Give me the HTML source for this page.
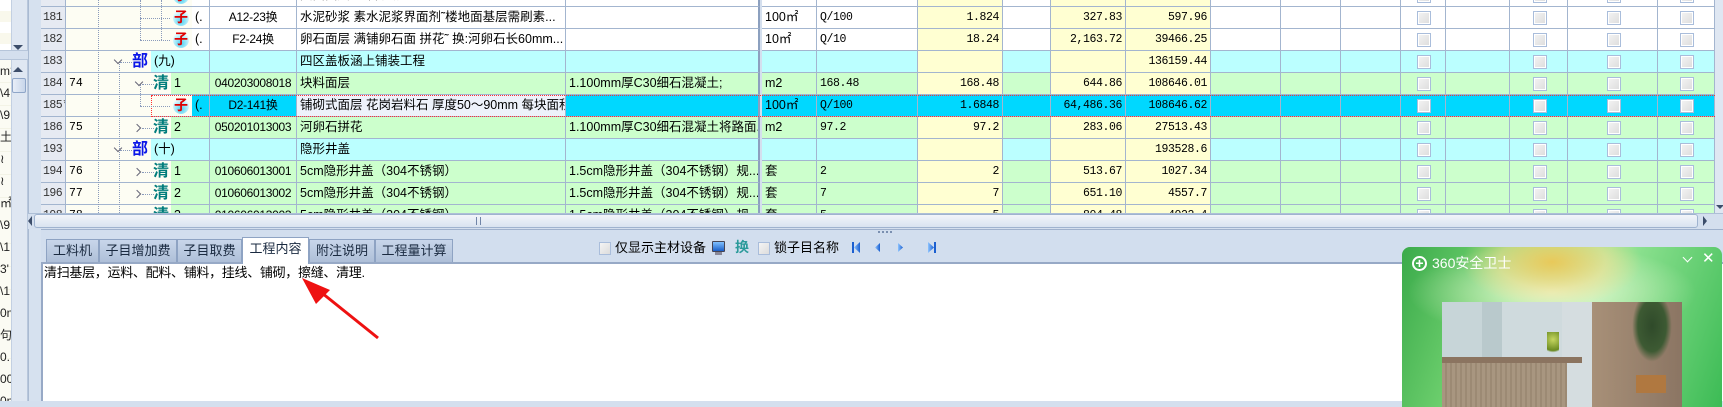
<!DOCTYPE html>
<html><head><meta charset="utf-8">
<style>
*{box-sizing:border-box;margin:0;padding:0}
body{width:1723px;height:401px;overflow:hidden;position:relative;background:#d4dfee;font-family:"Liberation Sans","Noto Sans CJK SC",sans-serif;font-size:13px;color:#000}
.a{position:absolute}
.r{position:absolute;left:41px;width:1674px;height:22px}
.c{position:absolute;top:0;height:22px;border-right:1px solid #a3b5cf;border-bottom:1px solid #a3b5cf;line-height:21px;white-space:nowrap;overflow:hidden;padding:0 3px;font-size:12.5px}
.rt{text-align:right}
.rh{left:0;width:25px;background:#e6eaf2;color:#333;padding-left:2px;font-family:"Liberation Mono",monospace;font-size:11.5px;letter-spacing:-0.5px}
.tr{left:25px;width:144px;background:#fdfdf3;border-right:none;font-family:"Liberation Mono",monospace;font-size:11.5px}
.code{left:169px;width:87px;text-align:center;font-family:"Liberation Sans",sans-serif;font-size:12px;letter-spacing:-0.3px;padding:0}
.nm{left:256px;width:269px}
.ds{left:525px;width:194px;border-right:2px solid #8ca0bf}
.un{left:721px;width:55px}
.qe{left:776px;width:101px;font-family:"Liberation Mono",monospace;font-size:11.5px;letter-spacing:-0.4px}
.q{left:877px;width:85px}
.b{left:962px;width:48px}
.p{left:1010px;width:75px}
.t{left:1085px;width:85px}
.q,.p,.t{font-family:"Liberation Mono",monospace;font-size:11.5px;letter-spacing:-0.4px}
.x1{left:1170px;width:70px}.x2{left:1240px;width:60px}.x3{left:1300px;width:60px}.x4{left:1360px;width:45px}.x5{left:1405px;width:64px}.x6{left:1469px;width:58px}.x7{left:1527px;width:90px}.x8{left:1617px;width:57px}
.W .c{background:#fff}.C .c{background:#bbffff}.G .c{background:#ccffcc}.S .c{background:#00d8ff}
.r .q,.r .p,.r .t{background:#ffffd2}
.S .q,.S .p,.S .t{background:#00d8ff}
.r .rh{background:#e6eaf2}.r .tr{background:#fdfdf3}
.cb::after{content:"";position:absolute;left:50%;top:4px;margin-left:-6px;width:12px;height:12px;border:1px solid #a9bddb;background:linear-gradient(135deg,#f4f4f4,#dcdcdc);box-shadow:inset 0 0 0 1px #fff}
.tag{position:absolute;top:0;height:22px;line-height:21px;font-weight:bold;font-size:16px}
.bu{color:#0a16e8}.qi{color:#007c7c}
.zi{position:absolute;top:3px;width:16px;height:16px;border-radius:50%;background:radial-gradient(circle at 50% 70%,#4ad0f0,#e8fbff 70%);color:#e00000;font-size:14px;font-weight:bold;line-height:14px;text-align:center}
.chev{position:absolute;top:7px;width:6px;height:6px;border-right:1.5px solid #667;border-bottom:1.5px solid #667}
.dl{position:absolute;border-left:1px dotted #8a9bbb}
.dh{position:absolute;border-top:1px dotted #8a9bbb;height:0}
.tab{position:absolute;top:239px;height:23px;background:linear-gradient(#c8d6ea,#aebfd8);border:1px solid #8ea3c3;border-bottom:none;font-size:13px;line-height:21px;text-align:center;color:#1a2a40}
</style></head><body>

<div class="a" style="left:0;top:0;width:11px;height:401px;background:#fbfbf3"></div>
<div class="a" style="left:0;top:0;width:11px;height:50px;background:repeating-linear-gradient(#fff 0 11px,#f9f8ec 11px 22px)"></div>
<div class="a" style="left:0;top:60px;width:11px;height:341px;background:repeating-linear-gradient(#fbfbf3 0 22px,#f3f3e6 22px 23px);font-size:12px;line-height:22px;color:#222;overflow:hidden">m3<br>\4<br>\9<br>土<br>≀<br>≀<br>㎡<br>\9<br>\1<br>3'<br>\1<br>0m<br>句<br>0.<br>00<br>0m<br>至</div>
<div class="a" style="left:11px;top:0;width:17px;height:401px;background:#dfe7f2;border-left:1px solid #c3d0e2;border-right:1px solid #b8c7dc"></div>
<div class="a" style="left:13px;top:45px;width:0;height:0;border-left:5px solid transparent;border-right:5px solid transparent;border-top:5px solid #3c4d6a"></div>
<div class="a" style="left:0;top:50px;width:28px;height:10px;background:#d4dfee;border-top:1px solid #b6c5da;border-bottom:1px solid #b6c5da"></div>
<div class="a" style="left:13px;top:67px;width:0;height:0;border-left:5px solid transparent;border-right:5px solid transparent;border-bottom:5px solid #3c4d6a"></div>
<div class="a" style="left:12px;top:78px;width:14px;height:15px;border:1px solid #8fa6c8;border-radius:2px;background:linear-gradient(90deg,#e8eef8,#c8d6ea)"></div>
<div class="a" style="left:28px;top:0;width:13px;height:401px;background:#d6e1ef;border-left:1px solid #a9bad2"></div>

<div class="r W" style="top:-15px"><div class="c rh"></div><div class="c tr"></div><div class="c" style="left:151px;width:18px;background:#fff"></div><div class="c code"></div><div class="c nm">陆面面层 细石混凝土</div><div class="c ds"></div><div class="c un">㎡</div><div class="c qe"></div><div class="c q"></div><div class="c b"></div><div class="c p"></div><div class="c t"></div><div class="c x1"></div><div class="c x2"></div><div class="c x3"></div><div class="c x4 cb"></div><div class="c x5"></div><div class="c x6 cb"></div><div class="c x7 cb"></div><div class="c x8 cb"></div></div>

<div class="r W" style="top:7px"><div class="c rh">181</div><div class="c tr"></div><div class="c" style="left:151px;width:18px;background:#fff">(.</div><div class="c code">A12-23换</div><div class="c nm">水泥砂浆 素水泥浆界面剂˜楼地面基层需刷素...</div><div class="c ds"></div><div class="c un">100㎡</div><div class="c qe">Q/100</div><div class="c q rt">1.824</div><div class="c b"></div><div class="c p rt">327.83</div><div class="c t rt">597.96</div><div class="c x1"></div><div class="c x2"></div><div class="c x3"></div><div class="c x4 cb"></div><div class="c x5"></div><div class="c x6 cb"></div><div class="c x7 cb"></div><div class="c x8 cb"></div></div>
<div class="r W" style="top:29px"><div class="c rh">182</div><div class="c tr"></div><div class="c" style="left:151px;width:18px;background:#fff">(.</div><div class="c code">F2-24换</div><div class="c nm">卵石面层 满铺卵石面 拼花˜ 换:河卵石长60mm...</div><div class="c ds"></div><div class="c un">10㎡</div><div class="c qe">Q/10</div><div class="c q rt">18.24</div><div class="c b"></div><div class="c p rt">2,163.72</div><div class="c t rt">39466.25</div><div class="c x1"></div><div class="c x2"></div><div class="c x3"></div><div class="c x4 cb"></div><div class="c x5"></div><div class="c x6 cb"></div><div class="c x7 cb"></div><div class="c x8 cb"></div></div>
<div class="r C" style="top:51px"><div class="c rh">183</div><div class="c tr"></div><div class="c" style="left:110px;width:59px">(九)</div><div class="c code"></div><div class="c nm">四区盖板涵上铺装工程</div><div class="c ds"></div><div class="c un"></div><div class="c qe"></div><div class="c q"></div><div class="c b"></div><div class="c p"></div><div class="c t rt">136159.44</div><div class="c x1"></div><div class="c x2"></div><div class="c x3"></div><div class="c x4 cb"></div><div class="c x5"></div><div class="c x6 cb"></div><div class="c x7 cb"></div><div class="c x8 cb"></div></div>
<div class="r G" style="top:73px"><div class="c rh">184</div><div class="c tr">74</div><div class="c" style="left:130px;width:39px">1</div><div class="c code">040203008018</div><div class="c nm">块料面层</div><div class="c ds">1.100mm厚C30细石混凝土;</div><div class="c un">m2</div><div class="c qe">168.48</div><div class="c q rt">168.48</div><div class="c b"></div><div class="c p rt">644.86</div><div class="c t rt">108646.01</div><div class="c x1"></div><div class="c x2"></div><div class="c x3"></div><div class="c x4 cb"></div><div class="c x5"></div><div class="c x6 cb"></div><div class="c x7 cb"></div><div class="c x8 cb"></div></div>
<div class="r S" style="top:95px"><div class="c rh">185*</div><div class="c tr"></div><div class="c" style="left:151px;width:18px">(.</div><div class="c code">D2-141换</div><div class="c nm" style="background:#eef2fb">铺砌式面层 花岗岩料石 厚度50～90mm 每块面积 0</div><div class="c ds"></div><div class="c un">100㎡</div><div class="c qe">Q/100</div><div class="c q rt">1.6848</div><div class="c b"></div><div class="c p rt">64,486.36</div><div class="c t rt">108646.62</div><div class="c x1"></div><div class="c x2"></div><div class="c x3"></div><div class="c x4 cb"></div><div class="c x5"></div><div class="c x6 cb"></div><div class="c x7 cb"></div><div class="c x8 cb"></div></div>
<div class="a" style="left:151px;top:95px;width:1564px;height:22px;border-top:1px dotted #ff3030;border-bottom:1px dotted #ff3030;border-left:1px dotted #ff3030"></div>
<div class="r G" style="top:117px"><div class="c rh">186</div><div class="c tr">75</div><div class="c" style="left:130px;width:39px">2</div><div class="c code">050201013003</div><div class="c nm">河卵石拼花</div><div class="c ds">1.100mm厚C30细石混凝土将路面...</div><div class="c un">m2</div><div class="c qe">97.2</div><div class="c q rt">97.2</div><div class="c b"></div><div class="c p rt">283.06</div><div class="c t rt">27513.43</div><div class="c x1"></div><div class="c x2"></div><div class="c x3"></div><div class="c x4 cb"></div><div class="c x5"></div><div class="c x6 cb"></div><div class="c x7 cb"></div><div class="c x8 cb"></div></div>
<div class="r C" style="top:139px"><div class="c rh">193</div><div class="c tr"></div><div class="c" style="left:110px;width:59px">(十)</div><div class="c code"></div><div class="c nm">隐形井盖</div><div class="c ds"></div><div class="c un"></div><div class="c qe"></div><div class="c q"></div><div class="c b"></div><div class="c p"></div><div class="c t rt">193528.6</div><div class="c x1"></div><div class="c x2"></div><div class="c x3"></div><div class="c x4 cb"></div><div class="c x5"></div><div class="c x6 cb"></div><div class="c x7 cb"></div><div class="c x8 cb"></div></div>
<div class="r G" style="top:161px"><div class="c rh">194</div><div class="c tr">76</div><div class="c" style="left:130px;width:39px">1</div><div class="c code">010606013001</div><div class="c nm">5cm隐形井盖（304不锈钢）</div><div class="c ds">1.5cm隐形井盖（304不锈钢）规...</div><div class="c un">套</div><div class="c qe">2</div><div class="c q rt">2</div><div class="c b"></div><div class="c p rt">513.67</div><div class="c t rt">1027.34</div><div class="c x1"></div><div class="c x2"></div><div class="c x3"></div><div class="c x4 cb"></div><div class="c x5"></div><div class="c x6 cb"></div><div class="c x7 cb"></div><div class="c x8 cb"></div></div>
<div class="r G" style="top:183px"><div class="c rh">196</div><div class="c tr">77</div><div class="c" style="left:130px;width:39px">2</div><div class="c code">010606013002</div><div class="c nm">5cm隐形井盖（304不锈钢）</div><div class="c ds">1.5cm隐形井盖（304不锈钢）规...</div><div class="c un">套</div><div class="c qe">7</div><div class="c q rt">7</div><div class="c b"></div><div class="c p rt">651.10</div><div class="c t rt">4557.7</div><div class="c x1"></div><div class="c x2"></div><div class="c x3"></div><div class="c x4 cb"></div><div class="c x5"></div><div class="c x6 cb"></div><div class="c x7 cb"></div><div class="c x8 cb"></div></div>
<div class="r G" style="top:205px"><div class="c rh">198</div><div class="c tr">78</div><div class="c" style="left:130px;width:39px">3</div><div class="c code">010606013003</div><div class="c nm">5cm隐形井盖（304不锈钢）</div><div class="c ds">1.5cm隐形井盖（304不锈钢）规...</div><div class="c un">套</div><div class="c qe">5</div><div class="c q rt">5</div><div class="c b"></div><div class="c p rt">804.48</div><div class="c t rt">4022.4</div><div class="c x1"></div><div class="c x2"></div><div class="c x3"></div><div class="c x4 cb"></div><div class="c x5"></div><div class="c x6 cb"></div><div class="c x7 cb"></div><div class="c x8 cb"></div></div>

<div class="dl" style="left:98px;top:0;height:213px"></div>
<div class="dl" style="left:119px;top:62px;height:151px"></div>
<div class="dl" style="left:140px;top:0;height:40px"></div>
<div class="dl" style="left:140px;top:84px;height:22px"></div>
<div class="dl" style="left:161px;top:0;height:40px"></div>
<div class="dh" style="left:140px;top:18px;width:30px"></div><div class="dh" style="left:140px;top:40px;width:30px"></div><div class="dh" style="left:140px;top:106px;width:30px"></div>
<div class="dh" style="left:120px;top:62px;width:12px"></div><div class="dh" style="left:120px;top:150px;width:12px"></div>
<div class="dh" style="left:142px;top:84px;width:12px"></div><div class="dh" style="left:142px;top:128px;width:12px"></div><div class="dh" style="left:142px;top:172px;width:12px"></div><div class="dh" style="left:142px;top:194px;width:12px"></div>
<div class="zi" style="left:173px;top:-12px">子</div>
<div class="zi" style="left:173px;top:10px">子</div>
<div class="zi" style="left:173px;top:32px">子</div>
<div class="zi" style="left:173px;top:98px">子</div>
<div class="chev" style="left:115px;top:57px;transform:rotate(45deg)"></div>
<div class="chev" style="left:115px;top:145px;transform:rotate(45deg)"></div>
<div class="chev" style="left:136px;top:79px;transform:rotate(45deg)"></div>
<div class="chev" style="left:134px;top:125px;transform:rotate(-45deg)"></div>
<div class="chev" style="left:134px;top:169px;transform:rotate(-45deg)"></div>
<div class="chev" style="left:134px;top:191px;transform:rotate(-45deg)"></div>
<div class="tag bu" style="left:132px;top:51px">部</div>
<div class="tag bu" style="left:132px;top:139px">部</div>
<div class="tag qi" style="left:153px;top:73px">清</div>
<div class="tag qi" style="left:153px;top:117px">清</div>
<div class="tag qi" style="left:153px;top:161px">清</div>
<div class="tag qi" style="left:153px;top:183px">清</div>
<div class="tag qi" style="left:153px;top:205px">清</div>

<div class="a" style="left:1715px;top:0;width:8px;height:213px;background:#dfe7f2"></div>
<div class="a" style="left:1716px;top:205px;width:0;height:0;border-left:4px solid transparent;border-right:4px solid transparent;border-top:4px solid #3c4d6a"></div>

<div class="a" style="left:28px;top:213px;width:1695px;height:16px;background:#d4dfee;border-top:1px solid #aebfd6"></div>
<div class="a" style="left:34px;top:214px;width:1664px;height:14px;border:1px solid #9fb3cf;border-radius:3px;background:linear-gradient(#f2f5fa,#d9e3f0)"></div>
<div class="a" style="left:28px;top:216px;width:0;height:0;border-top:5px solid transparent;border-bottom:5px solid transparent;border-right:4px solid #3c4d6a"></div>
<div class="a" style="left:1703px;top:216px;width:0;height:0;border-top:5px solid transparent;border-bottom:5px solid transparent;border-left:4px solid #3c4d6a"></div>
<div class="a" style="left:476px;top:217px;width:5px;height:8px;border-left:1px solid #7085a8;border-right:1px solid #7085a8"></div>

<div class="a" style="left:41px;top:229px;width:1682px;height:35px;background:#d2deee;border-top:1px solid #9fb1cc"></div>
<div class="a" style="left:878px;top:231px;width:14px;height:2px;border-top:2px dotted #7a8fb0"></div>
<div class="tab" style="left:46px;width:53px">工料机</div>
<div class="tab" style="left:99px;width:78px">子目增加费</div>
<div class="tab" style="left:177px;width:65px">子目取费</div>
<div class="tab" style="left:242px;top:237px;height:27px;width:67px;background:#fff;z-index:2">工程内容</div>
<div class="tab" style="left:309px;width:66px">附注说明</div>
<div class="tab" style="left:375px;width:78px">工程量计算</div>

<div class="a" style="left:599px;top:242px;width:12px;height:13px;border:1px solid #a9bddb;background:linear-gradient(135deg,#f4f4f4,#dcdcdc)"></div>
<div class="a" style="left:615px;top:239px;font-size:13px;line-height:18px">仅显示主材设备</div>
<div class="a" style="left:712px;top:241px;width:13px;height:11px;border:1px solid #445;background:linear-gradient(#7fc0ff,#1a5fc8);border-radius:1px"></div>
<div class="a" style="left:715px;top:252px;width:7px;height:3px;background:#889"></div>
<div class="a" style="left:735px;top:238px;font-size:14px;font-weight:bold;color:#2a9a9a;line-height:18px">换</div>
<div class="a" style="left:758px;top:242px;width:12px;height:13px;border:1px solid #a9bddb;background:linear-gradient(135deg,#f4f4f4,#dcdcdc)"></div>
<div class="a" style="left:774px;top:239px;font-size:13px;line-height:18px">锁子目名称</div>
<svg class="a" style="left:850px;top:241px" width="90" height="14">
<defs><linearGradient id="g" x1="0" x2="1"><stop offset="0" stop-color="#8ec4ff"/><stop offset="1" stop-color="#1b5fd0"/></linearGradient></defs>
<rect x="2" y="1" width="2" height="11" fill="#1b5fd0"/><path d="M10 1 L4 6.5 L10 12Z" fill="url(#g)"/>
<path d="M30 2 L25 6.5 L30 11Z" fill="url(#g)"/>
<path d="M48 2 L53 6.5 L48 11Z" fill="url(#g)"/>
<path d="M78 1 L84 6.5 L78 12Z" fill="url(#g)"/><rect x="84" y="1" width="2" height="11" fill="#1b5fd0"/>
</svg>

<div class="a" style="left:41px;top:262px;width:1682px;height:139px;background:#fff;border-top:2px solid #97a9c6;border-left:2px solid #97a9c6"></div>
<div class="a" style="left:44px;top:265px;font-size:13px;line-height:16px;letter-spacing:-0.3px">清扫基层，运料、配料、铺料，挂线、铺砌，擦缝、清理.</div>

<svg class="a" style="left:290px;top:270px" width="100" height="75">
<line x1="88" y1="68" x2="22" y2="15" stroke="#ee1111" stroke-width="3"/>
<path d="M12 8 L40 20 L26 34Z" fill="#ee1111"/>
</svg>

<div class="a" style="left:1402px;top:247px;width:320px;height:160px;border-radius:8px 8px 0 0;overflow:hidden;background:radial-gradient(ellipse 90px 45px at 150px 15px,#e8c95a,rgba(240,220,140,0.6) 60%,transparent),radial-gradient(ellipse 180px 60px at 150px 45px,rgba(235,250,215,0.95),transparent 80%),linear-gradient(110deg,#3aaa4a,#7fdc7a 35%,#9be89a 55%,#3cbb55)">
<div style="position:absolute;left:10px;top:9px;width:15px;height:15px;border:2px solid #fff;border-radius:50%;color:#fff;font-size:14px;line-height:10px;text-align:center;font-weight:bold">+</div>
<div style="position:absolute;left:30px;top:7px;color:#fff;font-size:14px;line-height:18px">360安全卫士</div>
<div style="position:absolute;left:282px;top:7px;width:7px;height:7px;border-right:1.5px solid #fff;border-bottom:1.5px solid #fff;transform:rotate(45deg)"></div>
<div style="position:absolute;left:300px;top:4px;color:#fff;font-size:15px;line-height:16px">✕</div>
<div style="position:absolute;left:40px;top:55px;width:240px;height:110px;background:linear-gradient(90deg,#c7d5d8 0 40px,#b9c9cc 40px 60px,#cfdadd 60px 120px,#d5dde0 120px 150px,#a89078 150px,#8b7563);">
<div style="position:absolute;left:0;top:55px;width:140px;height:6px;background:#8b7460"></div>
<div style="position:absolute;left:0;top:61px;width:125px;height:49px;background:repeating-linear-gradient(90deg,#a89680 0 3px,#9c8a74 3px 5px)"></div>
<div style="position:absolute;left:105px;top:30px;width:12px;height:25px;background:radial-gradient(circle at 50% 30%,#c6d660,#6a8a20 60%,transparent 70%)"></div>
<div style="position:absolute;left:190px;top:0;width:40px;height:60px;background:radial-gradient(ellipse at 50% 40%,#2f4a2a,#3d5a33 50%,transparent 70%)"></div>
<div style="position:absolute;left:194px;top:73px;width:30px;height:18px;background:#b07840"></div>
</div>
</div>
</body></html>
